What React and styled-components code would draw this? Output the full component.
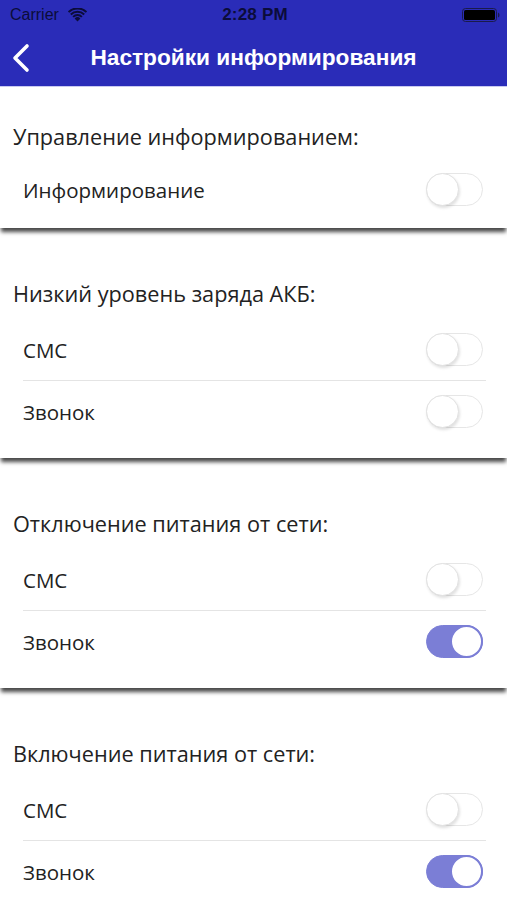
import React from "react";
import styled, { createGlobalStyle } from "styled-components";

const Global = createGlobalStyle`
  html, body { margin: 0; padding: 0; background: #ffffff; }
  body { font-family: "Open Sans", "Liberation Sans", sans-serif; }
  * { box-sizing: border-box; }
`;

const Page = styled.div`
  width: 507px;
  height: 900px;
  overflow: hidden;
  background: #ffffff;
`;

const Header = styled.header`
  background: #2a2cb8;
  border-bottom: 1px solid #c9caf0;
`;

const StatusBar = styled.div`
  height: 30px;
  display: grid;
  grid-template-columns: 1fr auto 1fr;
  align-items: center;
  padding: 0 7px 0 10px;
  color: #0b0c3a;
  font-family: "Liberation Sans", Arial, sans-serif;
  font-size: 16px;
`;

const StatusLeft = styled.div`
  display: flex;
  align-items: center;
  gap: 9px;
`;

const Clock = styled.div`
  font-weight: 700;
  font-size: 17px;
  letter-spacing: 0.2px;
`;

const StatusRight = styled.div`
  display: flex;
  justify-content: flex-end;
  align-items: center;
`;

const NavBar = styled.div`
  height: 56px;
  display: flex;
  align-items: center;
  position: relative;
`;

const BackButton = styled.button`
  background: none;
  border: 0;
  padding: 0 0 0 11px;
  display: flex;
  align-items: center;
  height: 100%;
  cursor: pointer;
`;

const NavTitle = styled.h1`
  position: absolute;
  left: 0;
  right: 0;
  top: 0;
  bottom: 2px;
  margin: 0;
  display: flex;
  align-items: center;
  justify-content: center;
  color: #ffffff;
  font-family: "Liberation Sans", Arial, sans-serif;
  font-weight: 700;
  font-size: 22.7px;
  pointer-events: none;
`;

const Card = styled.section`
  background: #ffffff;
  margin-top: ${(p) => (p.$first ? "0" : "16px")};
  padding-top: 36px;
  padding-bottom: ${(p) => (p.$first ? "8px" : "16px")};
  box-shadow: 0 5px 4px -1px rgba(0, 0, 0, 0.72);
  position: relative;
`;

const CardTitle = styled.h2`
  margin: 0 0 ${(p) => (p.$first ? "8px" : "11px")} 0;
  padding-left: 13px;
  font-weight: 400;
  font-size: 21.7px;
  line-height: 28px;
  color: #222222;
`;

const Row = styled.div`
  height: 61px;
  display: flex;
  align-items: center;
  justify-content: space-between;
  padding: 0 24px 0 23px;
`;

const RowLabel = styled.span`
  font-size: 20.5px;
  color: #222222;
`;

const Divider = styled.div`
  height: 1px;
  margin: 0 21px 0 23px;
  background: #e4e4e4;
`;

const Track = styled.div`
  width: 57px;
  height: 33px;
  border-radius: 17px;
  position: relative;
  background: ${(p) => (p.$on ? "#7b7ed6" : "#ffffff")};
  border: 1px solid ${(p) => (p.$on ? "#7b7ed6" : "#e6e6e6")};
  flex-shrink: 0;
`;

const Knob = styled.div`
  position: absolute;
  top: -1px;
  left: ${(p) => (p.$on ? "23px" : "-1px")};
  width: 33px;
  height: 33px;
  border-radius: 50%;
  background: #ffffff;
  border: ${(p) => (p.$on ? "2px solid #7b7ed6" : "1px solid #e2e2e2")};
  box-shadow: ${(p) => (p.$on ? "none" : "1px 2px 3px rgba(0,0,0,0.12)")};
`;

const Toggle = ({ on }) => (
  <Track $on={on}>
    <Knob $on={on} />
  </Track>
);

const Wifi = () => (
  <svg width="19" height="14" viewBox="0 0 19 14">
    <path d="M9.5 13.5 L6.6 10.4 A4.2 4.2 0 0 1 12.4 10.4 Z" fill="#0b0c3a" />
    <path d="M4.4 8.2 A7.3 7.3 0 0 1 14.6 8.2 L13.2 9.6 A5.3 5.3 0 0 0 5.8 9.6 Z" fill="#0b0c3a" />
    <path d="M2.1 5.8 A10.6 10.6 0 0 1 16.9 5.8 L15.5 7.2 A8.6 8.6 0 0 0 3.5 7.2 Z" fill="#0b0c3a" />
    <path d="M-0.2 3.4 A13.9 13.9 0 0 1 19.2 3.4 L17.8 4.8 A11.9 11.9 0 0 0 1.2 4.8 Z" fill="#0b0c3a" />
  </svg>
);

const Battery = () => (
  <svg width="38" height="14" viewBox="0 0 38 14">
    <rect x="0.5" y="0.5" width="34" height="13" rx="3" fill="none" stroke="#1a1b4a" strokeWidth="1" />
    <rect x="2" y="2" width="31" height="10" rx="1.6" fill="#000000" />
    <path d="M36 4.5 Q37.5 5 37.5 7 Q37.5 9 36 9.5 Z" fill="#1a1b4a" />
  </svg>
);

const Chevron = () => (
  <svg width="20" height="30" viewBox="0 0 20 30">
    <path d="M16 3 L4 15 L16 27" fill="none" stroke="#ffffff" strokeWidth="3.6" strokeLinecap="round" strokeLinejoin="round" />
  </svg>
);

const sections = [
  { title: "Управление информированием:", rows: [{ label: "Информирование", on: false }] },
  { title: "Низкий уровень заряда АКБ:", rows: [{ label: "СМС", on: false }, { label: "Звонок", on: false }] },
  { title: "Отключение питания от сети:", rows: [{ label: "СМС", on: false }, { label: "Звонок", on: true }] },
  { title: "Включение питания от сети:", rows: [{ label: "СМС", on: false }, { label: "Звонок", on: true }] },
];

export default function App() {
  return (
    <Page>
      <Global />
      <Header>
        <StatusBar>
          <StatusLeft>
            <span>Carrier</span>
            <Wifi />
          </StatusLeft>
          <Clock>2:28 PM</Clock>
          <StatusRight>
            <Battery />
          </StatusRight>
        </StatusBar>
        <NavBar>
          <BackButton aria-label="Назад">
            <Chevron />
          </BackButton>
          <NavTitle>Настройки информирования</NavTitle>
        </NavBar>
      </Header>
      {sections.map((s, i) => (
        <Card key={i} $first={i === 0}>
          <CardTitle $first={i === 0}>{s.title}</CardTitle>
          {s.rows.map((r, j) => (
            <React.Fragment key={j}>
              {j > 0 && <Divider />}
              <Row>
                <RowLabel>{r.label}</RowLabel>
                <Toggle on={r.on} />
              </Row>
            </React.Fragment>
          ))}
        </Card>
      ))}
    </Page>
  );
}
